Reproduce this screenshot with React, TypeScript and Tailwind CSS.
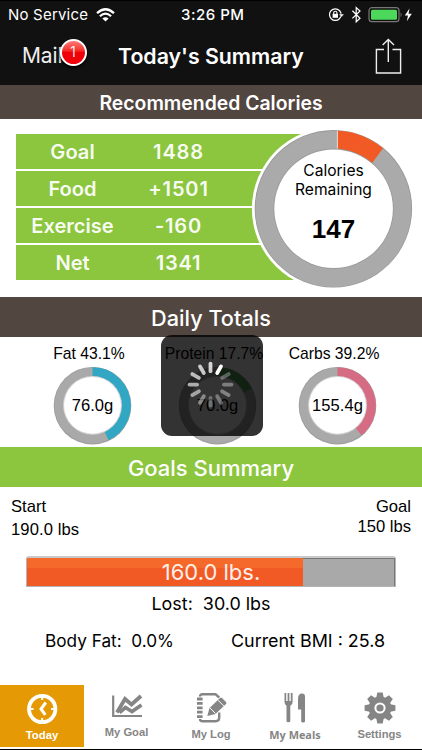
import React from 'react';

const helv = "font-['Liberation_Sans',Arial,sans-serif]";

// opacity of each spinner bar, clockwise from the top
const ticks = [0.8, 1, 0.3, 0.36, 0.38, 0.34, 0.3, 0.42, 0.55, 0.62, 0.68, 0.75];

interface MacroProps {
  label: string;
  grams: string;
  percent: number;
  color: string;
  className: string;
}

const polar = (c: number, r: number, percent: number) => {
  const a = (percent / 100) * Math.PI * 2;
  return `${(c + r * Math.sin(a)).toFixed(2)} ${(c - r * Math.cos(a)).toFixed(2)}`;
};

const Macro: React.FC<MacroProps> = ({ label, grams, percent, color, className }) => (
  <div className={`${helv} ${className} flex shrink-0 flex-col items-center text-black`}>
    <div className="h-[29px] whitespace-nowrap pr-[7px] pt-[7px] text-[15.7px] leading-[20px]">{label}</div>
    <div className="grid h-[79px] w-[79px] place-items-center">
      <svg className="col-start-1 row-start-1" width="79" height="79" viewBox="0 0 79 79">
        <circle cx="39.5" cy="39.7" r="38.8" fill="#9c9c9c" />
        <circle cx="39.5" cy="39.5" r="38" fill="#a9a9a9" />
        <path d={`M39.5 39.5 L39.5 1.2 A38.3 38.3 0 0 1 ${polar(39.5, 38.3, percent)} Z`} fill={color} />
        <circle cx="39.5" cy="39.3" r="29.4" fill="#d5d5d5" />
        <circle cx="39.5" cy="39.3" r="28.4" fill="#fff" />
      </svg>
      <span className="col-start-1 row-start-1 pt-px text-[16.6px] leading-[20px]">{grams}</span>
    </div>
  </div>
);

interface TabProps {
  label: string;
  className: string;
  labelClass: string;
  children: React.ReactNode;
}

const Tab: React.FC<TabProps> = ({ label, className, labelClass, children }) => (
  <div className={`${className} flex h-[62px] flex-col items-center`}>
    <div className="h-[44px] pt-[7px]">{children}</div>
    <span className={`${labelClass} whitespace-nowrap leading-[12px]`}>{label}</span>
  </div>
);

const rows = [
  { name: 'Goal', value: '1488' },
  { name: 'Food', value: '+1501' },
  { name: 'Exercise', value: '-160' },
  { name: 'Net', value: '1341' },
];

const StatusBar = () => (
  <div className="flex h-[30px] items-center border-t border-black bg-[#111] text-white">
    <span className="ml-[8px] w-[88px] whitespace-nowrap text-[15px] tracking-[0.2px]">No Service</span>
    <svg width="19" height="14" viewBox="0 0 19 14" className="-mt-[2px]">
      <path d="M1 5.2 Q9.5 -2.6 18 5.2" fill="none" stroke="#fff" strokeWidth="2.3" />
      <path d="M3.9 8.2 Q9.5 3.2 15.1 8.2" fill="none" stroke="#fff" strokeWidth="2.2" />
      <path d="M6.4 10.6 Q9.5 8 12.6 10.6 L9.5 13.6 Z" fill="#fff" />
    </svg>
    <span className="ml-[66px] w-[66px] whitespace-nowrap text-[15px] font-medium tracking-[0.5px]">3:26 PM</span>
    <svg width="85" height="18" viewBox="0 0 85 18" className="-mt-[2px] ml-[81px]">
      <circle cx="7.3" cy="8.6" r="5.8" fill="none" stroke="#fff" strokeWidth="1.2" />
      <path d="M10.7 8 h5.6 l-2.8 3.2z" fill="#fff" stroke="#111" strokeWidth=".5" />
      <rect x="4.6" y="7.8" width="5.4" height="4" fill="#fff" />
      <path d="M5.7 8 V6.8 a1.6 1.6 0 0 1 3.2 0 V8" fill="none" stroke="#fff" strokeWidth="1.1" />
      <path d="M24.4 4.8 L32 12.2 L28.2 15.8 V1.5 L32 5 L24.4 12.4" fill="none" stroke="#fff" strokeWidth="1.2" />
      <rect x="41" y="1.7" width="30" height="14" rx="3" fill="none" stroke="#777" strokeWidth="1.2" />
      <rect x="43" y="3.7" width="26" height="10" rx="1.5" fill="#4cd95b" />
      <path d="M72.6 6.2 q2 2.4 0 5z" fill="#777" />
      <path d="M81.5 2.5 L76.8 9.6 H80 L78.8 15.2 L83.8 7.8 H80.5 Z" fill="#fff" />
    </svg>
  </div>
);

const NavBar = () => (
  <div className="flex h-[55px] items-center bg-[#111] pb-[3px] text-white">
    <div className="relative ml-[22px] w-[96px]">
      <span className="text-[21px] leading-[30px] tracking-[-0.1px] text-[#eee]">Mail</span>
      <div className="absolute -top-[2px] left-[37.5px] flex h-[27px] w-[27px] items-center justify-center rounded-full border-2 border-white bg-linear-to-b from-[#ff7777] to-[#f00008] to-50% text-[15px] font-light shadow-[0_2px_3px_#000]">
        1
      </div>
    </div>
    <h1 className="w-[190px] whitespace-nowrap text-[21.3px] font-semibold leading-[28px]">Today's Summary</h1>
    <svg width="28" height="37" viewBox="0 0 28 37" className="ml-[66px]" fill="none" stroke="#eee" strokeWidth="1.4">
      <path d="M10 11.5 H2.4 V35 H26.6 V11.5 H18.5 M14.3 24 V1.6 M8.6 7 L14.3 1.4 L20 7" />
    </svg>
  </div>
);

const Calories = () => (
  <div className="grid h-[178px] grid-cols-1 grid-rows-1 bg-white">
    <div className="col-start-1 row-start-1 flex flex-col gap-[2px] pl-[16px] pt-[15px]">
      {rows.map((row) => (
        <div key={row.name} className="flex h-[35px] w-[300px] items-center bg-[#8bc63e] pt-[2px] text-[20.1px] font-semibold leading-[33px] text-white/95">
          <span className="w-[113px] text-center">{row.name}</span>
          <span className="w-[99px] text-center tracking-[0.8px]">{row.value}</span>
        </div>
      ))}
    </div>
    <div className="col-start-1 row-start-1 ml-[251px] mt-[7px] grid h-[166px] w-[166px]">
      <svg className="col-start-1 row-start-1" width="166" height="166" viewBox="251 126 166 166">
        <circle cx="333.4" cy="208.7" r="81.5" fill="#fff" />
        <circle cx="333.4" cy="208.7" r="78.7" fill="#969696" />
        <circle cx="333.4" cy="208.9" r="78" fill="#aaa" />
        <path d="M337.6 130.7 A78 78 0 0 1 383 148.3 L371.6 163.7 L337.4 150 Z" fill="#f15a24" />
        <path d="M337.4 130.7 V150" stroke="#eee" strokeWidth=".8" />
        <circle cx="333.6" cy="208.7" r="60.1" fill="#989898" />
        <circle cx="333.6" cy="208.8" r="59.3" fill="#fff" />
      </svg>
      <div className="col-start-1 row-start-1 flex flex-col items-center pr-[1px] pt-[36px] text-center text-[15.6px] leading-[18.5px] text-black">
        <p>
          Calories
          <br />
          Remaining
        </p>
        <span className={`${helv} mt-[15px] text-[26px] font-bold leading-[30px]`}>147</span>
      </div>
    </div>
  </div>
);

const Spinner = () => (
  <div className="absolute left-[161px] top-[335px] h-[101px] w-[102px] rounded-[11px] bg-black/80">
    <svg width="102" height="101" viewBox="0 0 102 101">
      {ticks.map((opacity, i) => (
        <line
          key={i}
          x1="49.5"
          y1="28.6"
          x2="49.5"
          y2="36.2"
          stroke="#fff"
          strokeWidth="3.8"
          strokeLinecap="round"
          opacity={opacity}
          transform={`rotate(${i * 30} 49.5 49.6)`}
        />
      ))}
    </svg>
  </div>
);

const Goals = () => (
  <div className="h-[197px] bg-white text-black">
    <div className={`${helv} flex h-[69px] justify-between pl-[11px] pr-[11px] pt-[9px] text-[16.6px]`}>
      <div>
        <div className="leading-[22px]">Start</div>
        <div className="leading-[24px] tracking-[0.1px]">190.0 lbs</div>
      </div>
      <div className="text-right">
        <div className="leading-[22px]">Goal</div>
        <div className="leading-[18px]">150 lbs</div>
      </div>
    </div>
    <div className="ml-[26px] grid h-[31px] w-[370px] rounded-t-[3px] border-b border-l border-r border-t-2 border-[#b5b5b5] border-t-[#c9c9c9] bg-[#a9a9a9]">
      <div className="col-start-1 row-start-1 w-[276px] bg-linear-to-b from-[#f5692a] from-35% to-[#f15a24] to-35%" />
      <div className="col-start-1 row-start-1 ml-[276px] border-r border-t border-[#777]" />
      <span className="col-start-1 row-start-1 text-center text-[22px] leading-[28px] text-white/90">160.0 lbs.</span>
    </div>
    <div className="pt-[5px] text-center text-[17.9px] leading-[24px]">
      Lost:&nbsp; 30.0 lbs
    </div>
    <div className="flex justify-between pl-[45px] pr-[37px] pt-[12px] leading-[26px]">
      <span className="text-[17.2px]">Body Fat:&nbsp; 0.0%</span>
      <span className="text-[17.9px]">Current BMI : 25.8</span>
    </div>
  </div>
);

const TabBar = () => (
  <div className={`${helv} flex h-[66px] items-start border-b border-black bg-white pt-[1px] font-bold text-[#858585]`}>
    <Tab label="Today" className="w-[84px] bg-[#e59a05] text-white" labelClass="text-[11.3px]">
      <svg width="32" height="34" viewBox="0 0 32 34" fill="none" stroke="#fff">
        <circle cx="16.2" cy="17" r="13.2" strokeWidth="3.8" />
        <path d="M16.2 4v4M16.2 26v4M3.5 17h4M25 17h4" strokeWidth="2" />
        <path d="M19.8 10.5 L15 17 L19.3 22.8" strokeWidth="3" />
      </svg>
    </Tab>
    <Tab label="My Goal" className="w-[85px]" labelClass="-mt-[3px] text-[11.2px]">
      <svg width="32" height="32" viewBox="0 0 32 32" fill="none" stroke="#858585">
        <path d="M2.2 3.5 V24 H31" strokeWidth="2.2" />
        <path d="M6 20.5 L14 7 L20.5 12.5 L30 4" strokeWidth="3.8" />
        <path d="M8.5 20.5 L14.5 15.5 L21 19.5 L30.5 13" strokeWidth="3.6" />
      </svg>
    </Tab>
    <Tab label="My Log" className="w-[84px]" labelClass="-mt-[1px] text-[11.2px]">
      <svg width="34" height="32" viewBox="0 0 34 32" fill="none" stroke="#858585">
        <path d="M6 4.5 Q6 2.2 8.5 2.2 H21.5 L25.2 5.5 M25.2 20.5 V25.5 Q25.2 29.2 21.5 29.2 H8.5 Q6 29.2 6 27" strokeWidth="2.4" />
        <path d="M3 7h5.6M3 11.4h5.6M3 15.8h5.6M3 20.2h5.6M3 24.6h5.6" strokeWidth="2.8" />
        <path d="M13.3 24 L15.5 16 L26 6 Q27 5 28 6 L32 10 Q33 11 32 12 L21.5 22 Z" fill="#858585" stroke="none" />
        <path d="M16 16 L21.5 21.5 M24 8.2 L29.8 14" stroke="#fff" strokeWidth="1" />
      </svg>
    </Tab>
    <Tab label="My Meals" className="w-[84px]" labelClass="font-['Open_Sans',sans-serif] text-[10.9px]">
      <svg width="32" height="32" viewBox="0 0 32 32" fill="#858585">
        <path d="M5.5 1 h1.7 v8 h1.4 v-8 h1.8 v8 h1.4 v-8 h1.8 v9 q0 3-2.3 3.7 v15.3 q0 1.3-1.9 1.3 t-1.9-1.3 v-15.3 q-2-.8-2-3.7z" />
        <path d="M19 7 q0-5.5 4-5.5 q3 0 3 3 v25 q0 1-1.9 1 t-1.9-1 V17.5 H19z" />
      </svg>
    </Tab>
    <Tab label="Settings" className="w-[85px]" labelClass="-mt-[1px] text-[11.2px]">
      <svg width="32" height="32" viewBox="0 0 32 32" fill="#858585">
        {[0, 45, 90, 135].map((a) => (
          <path key={a} d="M13.3 0.6h5.4l1 5v20.8l-1 5h-5.4l-1-5V5.6z" transform={`rotate(${a} 16 16)`} />
        ))}
        <circle cx="16" cy="16" r="11.4" />
        <circle cx="16" cy="16" r="5.6" fill="#fff" />
        <circle cx="16" cy="16" r="3.6" />
      </svg>
    </Tab>
  </div>
);

export default function App() {
  return (
    <div className="relative h-[750px] w-[422px] overflow-hidden bg-white font-[Inter,sans-serif]">
      <StatusBar />
      <NavBar />
      <h2 className="h-[34px] bg-[#524640] text-center text-[19.4px] font-semibold leading-[36px] text-white">Recommended Calories</h2>
      <Calories />
      <h2 className="h-[40px] bg-[#524640] text-center text-[21.7px] font-medium leading-[42px] text-white">Daily Totals</h2>
      <div className="flex h-[110px] pl-[31.5px]">
        <Macro label="Fat 43.1%" grams="76.0g" percent={43.1} color="#31a7c4" className="w-[122px]" />
        <Macro label="Protein 17.7%" grams="70.0g" percent={17.7} color="#4fa35a" className="w-[128px]" />
        <Macro label="Carbs 39.2%" grams="155.4g" percent={39.2} color="#d66c84" className="w-[112px]" />
      </div>
      <h2 className="h-[40px] bg-[#8bc63e] text-center text-[22px] font-medium leading-[42px] text-white">Goals Summary</h2>
      <Goals />
      <TabBar />
      <Spinner />
    </div>
  );
}
